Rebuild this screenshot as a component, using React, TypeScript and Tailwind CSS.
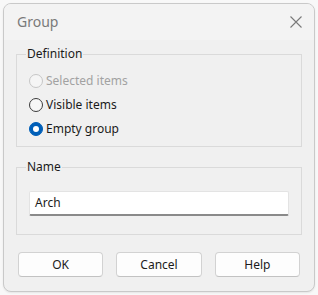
import React from 'react';

type RadioProps = { label: string; checked?: boolean; disabled?: boolean };

const Radio: React.FC<RadioProps> = ({ label, checked, disabled }) => {
    let circle = 'border border-[#3b3b3b] bg-[#f7f7f7]';
    if (disabled) circle = 'border border-[#c6c6c6] bg-[#f5f5f5]';
    if (checked) circle = 'bg-[#005fb8] border border-[#005fb8]';
    return (
        <div className='flex items-center h-[24px] gap-[3px]'>
            <span className={`w-[14px] h-[14px] rounded-full flex items-center justify-center ${circle}`}>
                {checked && <span className='w-[6px] h-[6px] rounded-full bg-white' />}
            </span>
            <span className={disabled ? 'text-[#a2a2a2]' : 'text-[#1b1b1b]'}>{label}</span>
        </div>
    );
};

const App: React.FC = () => {
    return (
        <div className="w-[318px] h-[295px] bg-[#f8f8f8] p-[3px] text-[12px] leading-[16px]" style={{ fontFamily: '"Noto Sans", sans-serif' }}>
            <div className="w-[312px] h-[289px] border border-[#c9c9c9] rounded-[8px] bg-[#f0f0f0] overflow-hidden shadow-[0_1px_2px_rgba(0,0,0,0.08)]">
                <div className="h-[36px] bg-[#f3f3f3] flex items-center justify-between pl-[13px] pr-[11px]">
                    <span className="text-[14px] text-[#7a7a7a]">Group</span>
                    <svg width="14" height="14" viewBox="0 0 14 14" className="text-[#7a7a7a]">
                        <path d="M1.5 1.5 L12.5 12.5 M12.5 1.5 L1.5 12.5" stroke="currentColor" strokeWidth="1.1" fill="none" />
                    </svg>
                </div>

                <div className="px-[12px] pt-[6px]">
                    <fieldset className="border border-[#dadada] h-[101px] px-[12px] pb-[6px]">
                        <legend className="ml-[-3px] px-[1px] text-[#1b1b1b]">Definition</legend>
                        <div className="pt-[7px]">
                            <Radio label="Selected items" disabled />
                            <Radio label="Visible items" />
                            <Radio label="Empty group" checked />
                        </div>
                    </fieldset>

                    <fieldset className="mt-[12px] border border-[#dadada] h-[76px] px-[12px]">
                        <legend className="ml-[-3px] px-[1px] text-[#1b1b1b]">Name</legend>
                        <div className="pt-[16px]">
                            <div className="h-[25px] bg-white border border-[#e3e3e3] border-b-[2px] border-b-[#8a8a8a] rounded-[2px] flex items-center px-[5px] text-[#1b1b1b]">
                                Arch
                            </div>
                        </div>
                    </fieldset>

                    <div className="mt-[17px] px-[2px] flex gap-[13px]">
                        {['OK', 'Cancel', 'Help'].map((b) => (
                            <button key={b} className="w-[86px] h-[25px] bg-[#fdfdfd] border border-[#d2d2d2] border-b-[#c2c2c2] rounded-[4px] text-[#1b1b1b] flex items-center justify-center">
                                {b}
                            </button>
                        ))}
                    </div>
                </div>
            </div>
        </div>
    );
};

export default App;
